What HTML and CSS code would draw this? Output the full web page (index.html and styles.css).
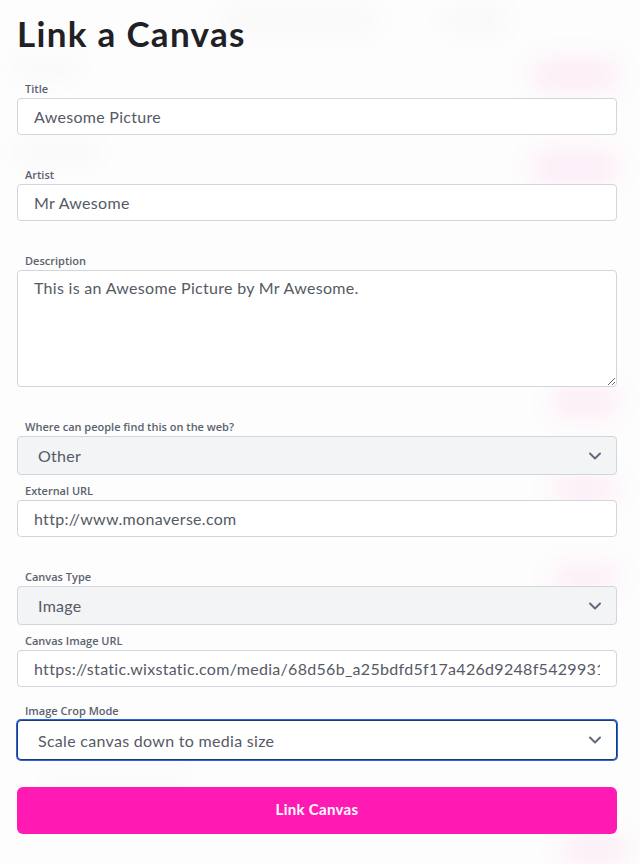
FILE: index.html
```html
<!DOCTYPE html>
<html lang="en">
<head>
<meta charset="utf-8">
<title>Link a Canvas</title>
<link rel="stylesheet" href="styles.css">
</head>
<body>
<div class="backdrop" aria-hidden="true">
  <span class="blob gray g1"></span>
  <span class="blob gray g2"></span>
  <span class="blob gray g3"></span>
  <span class="blob gray g4"></span>
  <span class="blob gray g5"></span>
  <span class="blob pink p1"></span>
  <span class="blob pink p2"></span>
  <span class="blob pink p3"></span>
  <span class="blob pink p4"></span>
  <span class="blob pink p5"></span>
  <span class="blob pink p6"></span>
</div>
<main class="panel">
  <h1 class="heading">Link a Canvas</h1>
  <form class="form">
    <div class="field f-title">
      <label class="label">Title</label>
      <input class="control" type="text" value="Awesome Picture">
    </div>
    <div class="field f-gap">
      <label class="label">Artist</label>
      <input class="control" type="text" value="Mr Awesome">
    </div>
    <div class="field f-gap">
      <label class="label">Description</label>
      <textarea class="control area">This is an Awesome Picture by Mr Awesome.</textarea>
    </div>
    <div class="field f-gap">
      <label class="label">Where can people find this on the web?</label>
      <div class="select">
        <span class="select-value">Other</span>
        <svg class="chev" width="14" height="10" viewBox="0 0 14 10"><path d="M2 2.5l5 5 5-5" fill="none" stroke="#5f6b7a" stroke-width="2" stroke-linecap="round" stroke-linejoin="round"/></svg>
      </div>
    </div>
    <div class="field f-tight">
      <label class="label">External URL</label>
      <input class="control" type="text" value="http://www.monaverse.com">
    </div>
    <div class="field f-gap">
      <label class="label">Canvas Type</label>
      <div class="select">
        <span class="select-value">Image</span>
        <svg class="chev" width="14" height="10" viewBox="0 0 14 10"><path d="M2 2.5l5 5 5-5" fill="none" stroke="#5f6b7a" stroke-width="2" stroke-linecap="round" stroke-linejoin="round"/></svg>
      </div>
    </div>
    <div class="field f-tight2">
      <label class="label">Canvas Image URL</label>
      <input class="control" type="text" value="https://static.wixstatic.com/media/68d56b_a25bdfd5f17a426d9248f54299311c3b~mv2.png">
    </div>
    <div class="field f-mid">
      <label class="label">Image Crop Mode</label>
      <div class="select focused">
        <span class="select-value">Scale canvas down to media size</span>
        <svg class="chev" width="14" height="10" viewBox="0 0 14 10"><path d="M2 2.5l5 5 5-5" fill="none" stroke="#5f6b7a" stroke-width="2" stroke-linecap="round" stroke-linejoin="round"/></svg>
      </div>
    </div>
    <button class="submit" type="button">Link Canvas</button>
  </form>
</main>
</body>
</html>
```

FILE: styles.css
```css
* { box-sizing: border-box; }

html, body {
  margin: 0;
  padding: 0;
}

body {
  width: 640px;
  height: 864px;
  overflow: hidden;
  background: #fdfdfd;
  position: relative;
  font-family: "Lato", "Open Sans", sans-serif;
}

.backdrop {
  position: absolute;
  inset: 0;
  z-index: 0;
  pointer-events: none;
}

.blob {
  position: absolute;
  border-radius: 999px;
  filter: blur(12px);
}

.gray { background: rgba(0, 0, 0, 0.02); }
.pink { background: rgba(255, 30, 170, 0.07); }

.g1 { left: 220px; top: 6px; width: 160px; height: 28px; }
.g2 { left: 440px; top: 6px; width: 70px; height: 28px; }
.g3 { left: 12px; top: 56px; width: 70px; height: 22px; }
.g4 { left: 12px; top: 140px; width: 90px; height: 24px; }
.g5 { left: 40px; top: 770px; width: 150px; height: 18px; background: rgba(0, 0, 0, 0.012); }

.p1 { left: 530px; top: 58px; width: 90px; height: 34px; }
.p2 { left: 530px; top: 150px; width: 90px; height: 36px; }
.p3 { left: 550px; top: 385px; width: 70px; height: 32px; }
.p4 { left: 550px; top: 475px; width: 70px; height: 28px; }
.p5 { left: 550px; top: 565px; width: 70px; height: 26px; }
.p6 { left: 560px; top: 835px; width: 70px; height: 30px; }

.panel {
  position: relative;
  z-index: 1;
  padding: 0 23px 0 17px;
}

.heading {
  margin: 12px 0 0;
  font-family: "Lato", sans-serif;
  font-weight: 700;
  font-size: 35px;
  line-height: 42px;
  color: #1f2126;
  letter-spacing: 1.3px;
}

.form {
  display: flex;
  flex-direction: column;
}

.field {
  display: flex;
  flex-direction: column;
}

.f-title { margin-top: 28px; }
.f-gap { margin-top: 33px; }
.f-tight { margin-top: 9px; }
.f-tight2 { margin-top: 9px; }
.f-mid { margin-top: 17px; }

.label {
  display: block;
  padding-left: 8px;
  margin-bottom: 2px;
  font-family: "Open Sans", sans-serif;
  font-weight: 600;
  font-size: 11px;
  line-height: 14px;
  color: #5b6270;
}

.control {
  display: block;
  width: 600px;
  height: 37px;
  margin: 0;
  padding: 0 16px;
  border: 1px solid #d3d5dc;
  border-radius: 4px;
  background: #ffffff;
  font-family: "Lato", sans-serif;
  font-size: 16px;
  color: #555a65;
  letter-spacing: 0.3px;
  outline: none;
}

.area {
  height: 117px;
  padding: 6px 16px;
  line-height: 22px;
  resize: vertical;
}

.select {
  display: flex;
  align-items: center;
  justify-content: space-between;
  width: 600px;
  height: 39px;
  padding: 0 14px 0 20px;
  border: 1px solid #d3d5dc;
  border-radius: 4px;
  background: #f3f4f6;
}

.select-value {
  font-family: "Lato", sans-serif;
  font-size: 16px;
  color: #555a65;
  letter-spacing: 0.3px;
}

.chev { display: block; }

.select.focused {
  height: 40px;
  background: #ffffff;
  border-color: #1f3a6a;
  box-shadow: 0 0 0 1px #2563eb;
}

.submit {
  margin-top: 27px;
  width: 600px;
  height: 47px;
  border: none;
  border-radius: 6px;
  padding: 0 0 3px;
  background: #ff1bb3;
  color: #ffffff;
  font-family: "Lato", sans-serif;
  font-weight: 700;
  font-size: 15px;
  letter-spacing: 0.3px;
  cursor: pointer;
}
```
